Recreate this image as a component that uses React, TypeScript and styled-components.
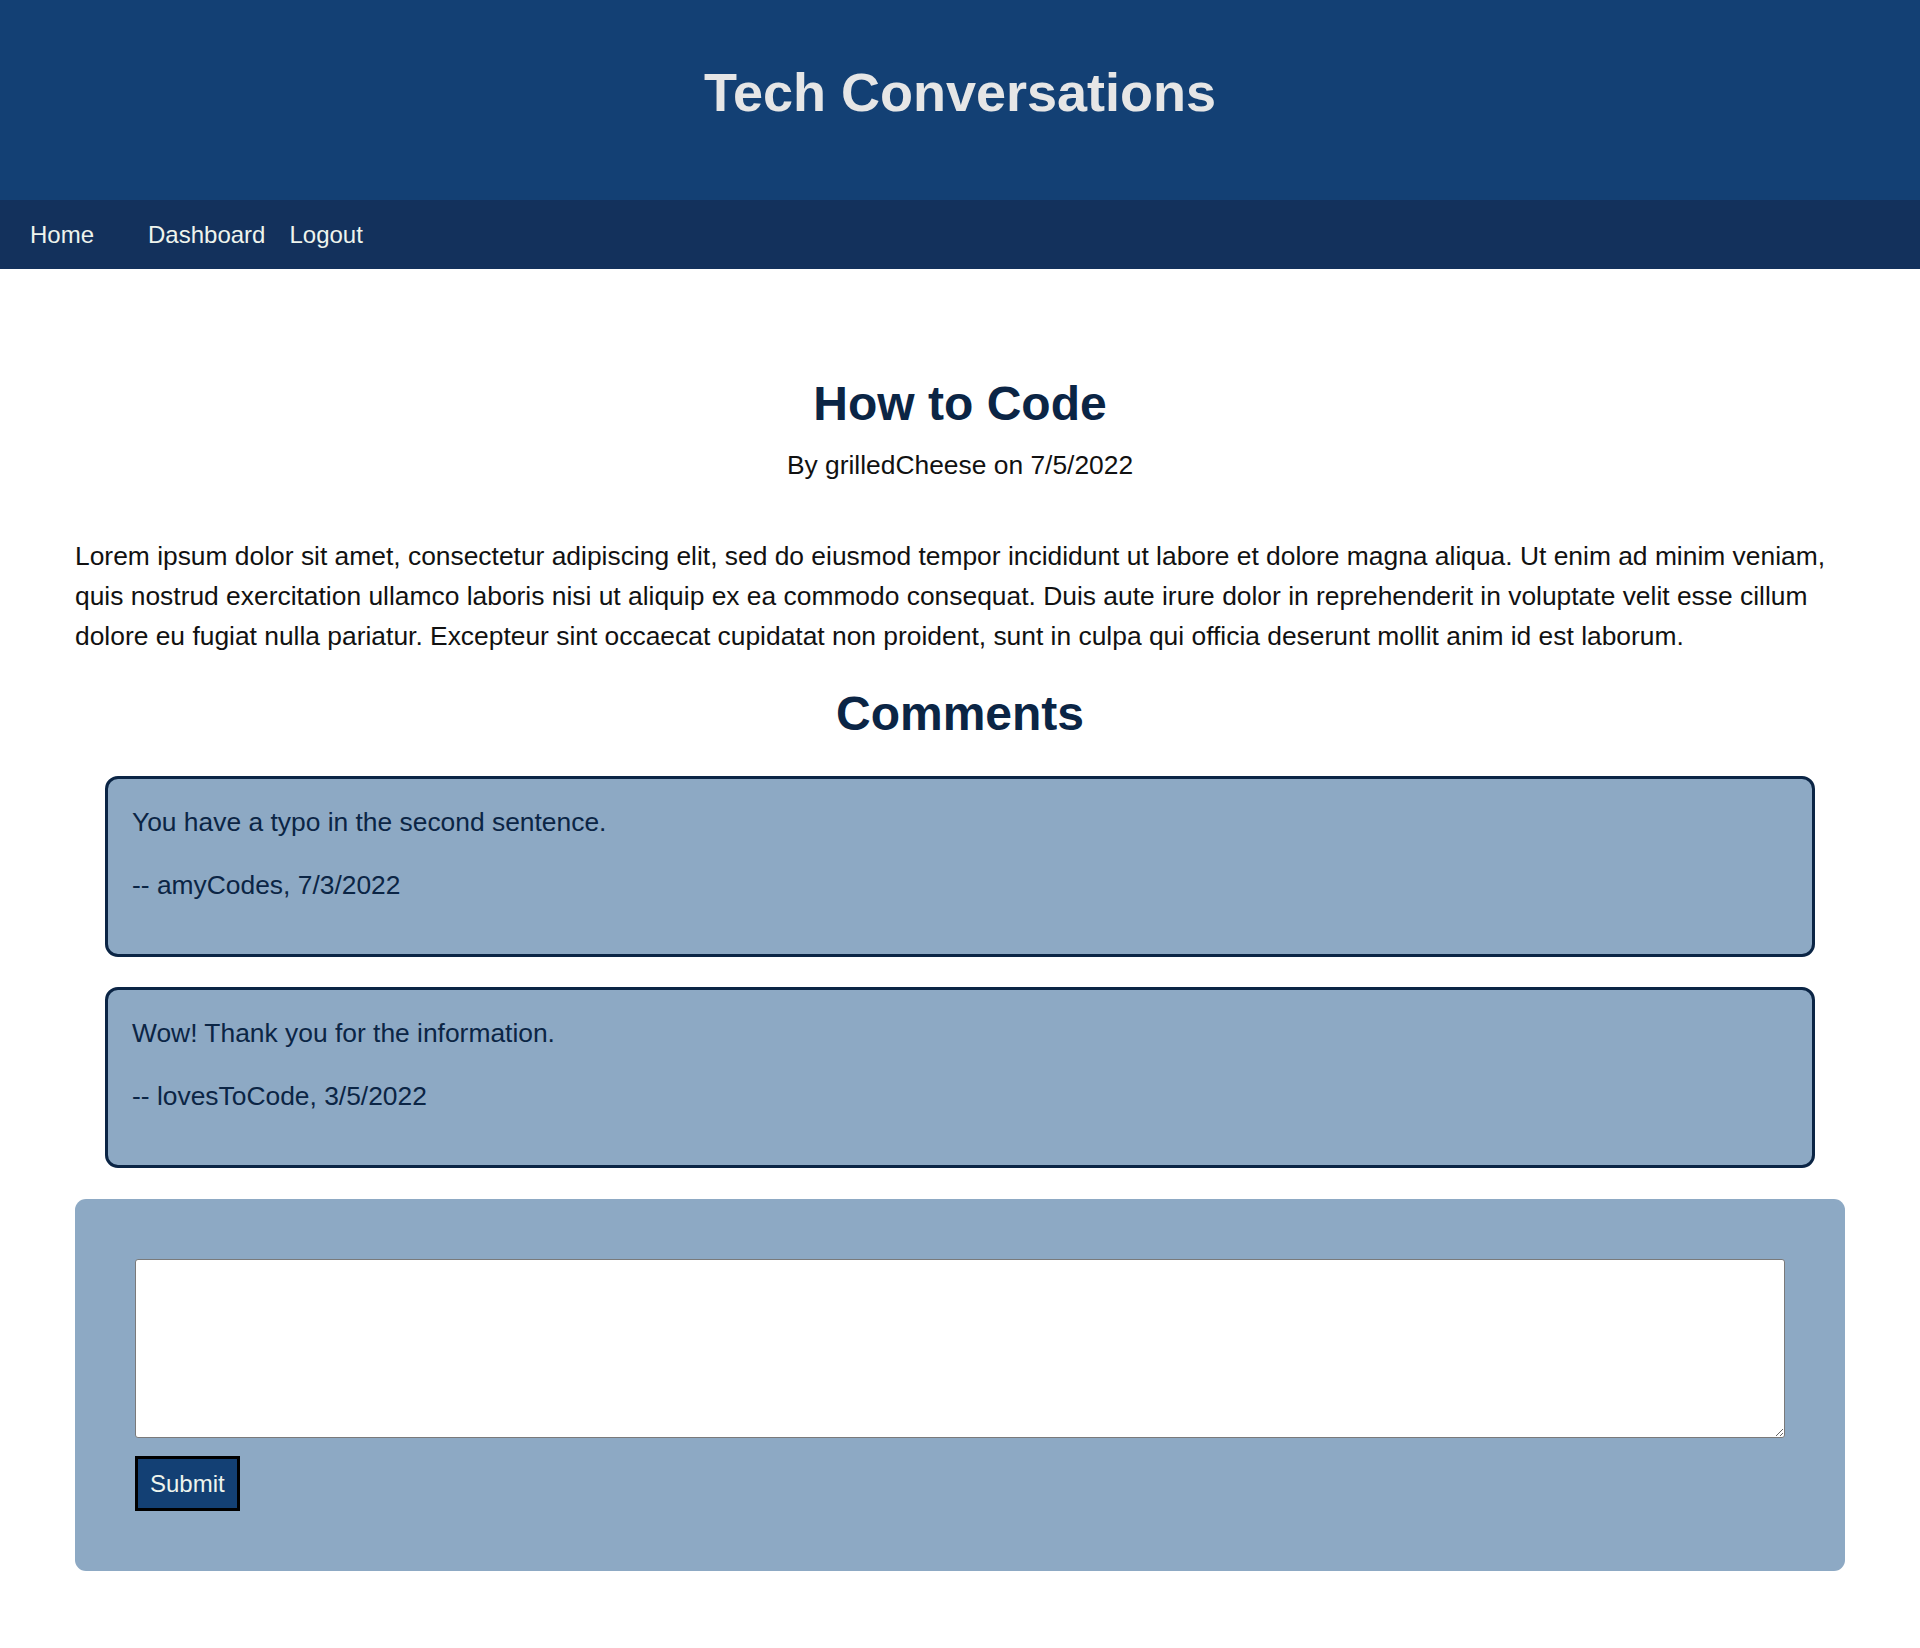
import React, { useState } from 'react';
import styled, { createGlobalStyle } from 'styled-components';

const GlobalStyle = createGlobalStyle`
  * {
    box-sizing: border-box;
  }
  body {
    margin: 0;
    font-family: 'Liberation Sans', Arial, sans-serif;
    background: #ffffff;
    color: #111111;
  }
`;

const Header = styled.header`
  height: 200px;
  background: #134074;
  display: flex;
  justify-content: center;
  align-items: center;
  padding-bottom: 16px;
  h1 {
    margin: 0;
    font-size: 54px;
    font-weight: 700;
    color: #e6e6e6;
  }
`;

const Nav = styled.nav`
  height: 69px;
  background: #13315c;
  display: flex;
  align-items: center;
  padding-left: 30px;
  gap: 24px;
`;

const NavLink = styled.a<{ $spaced?: boolean }>`
  font-size: 24px;
  color: #eef4ed;
  text-decoration: none;
  cursor: pointer;
  margin-right: ${(p) => (p.$spaced ? '30px' : '0')};
`;

const Main = styled.main`
  padding: 0 75px 77px;
  display: flex;
  flex-direction: column;
`;

const Title = styled.h2`
  margin: 107px 0 0;
  text-align: center;
  font-size: 48px;
  line-height: 56px;
  font-weight: 700;
  color: #0b2545;
`;

const Byline = styled.p`
  margin: 18px 0 0;
  text-align: center;
  font-size: 26.4px;
  line-height: 30px;
`;

const Body = styled.p`
  margin: 56px 0 0;
  font-size: 26.4px;
  line-height: 40px;
`;

const SectionTitle = styled.h2`
  margin: 30px 0 0;
  text-align: center;
  font-size: 48px;
  line-height: 56px;
  font-weight: 700;
  color: #0b2545;
`;

const CommentList = styled.ul`
  list-style: none;
  margin: 34px 0 0;
  padding: 0 30px;
  display: flex;
  flex-direction: column;
  gap: 30px;
`;

const CommentCard = styled.li`
  background: #8da9c4;
  border: 3px solid #0b2545;
  border-radius: 13px;
  padding: 28px 24px 54px;
  display: flex;
  flex-direction: column;
  gap: 33px;
  p {
    margin: 0;
    font-size: 26.4px;
    line-height: 30px;
    color: #0b2545;
  }
`;

const Form = styled.form`
  margin-top: 31px;
  background: #8da9c4;
  border-radius: 11px;
  padding: 60px;
  display: flex;
  flex-direction: column;
  align-items: flex-start;
  gap: 18px;
`;

const TextArea = styled.textarea`
  width: 100%;
  height: 179px;
  border: 1px solid #7a7a7a;
  border-radius: 3px;
  background: #ffffff;
  font-family: 'Liberation Sans', Arial, sans-serif;
  font-size: 20px;
  padding: 4px;
`;

const SubmitButton = styled.button`
  background: #134074;
  color: #eef4ed;
  border: 3px solid #000000;
  font-family: 'Liberation Sans', Arial, sans-serif;
  font-size: 24px;
  line-height: 27px;
  padding: 11px 12px;
  cursor: pointer;
`;

const comments = [
  { text: 'You have a typo in the second sentence.', user: 'amyCodes', date: '7/3/2022' },
  { text: 'Wow! Thank you for the information.', user: 'lovesToCode', date: '3/5/2022' },
];

const App = () => {
  const [draft, setDraft] = useState('');
  return (
    <>
      <GlobalStyle />
      <Header>
        <h1>Tech Conversations</h1>
      </Header>
      <Nav>
        <NavLink $spaced>Home</NavLink>
        <NavLink>Dashboard</NavLink>
        <NavLink>Logout</NavLink>
      </Nav>
      <Main>
        <Title>How to Code</Title>
        <Byline>By grilledCheese on 7/5/2022</Byline>
        <Body>
          Lorem ipsum dolor sit amet, consectetur adipiscing elit, sed do eiusmod tempor
          incididunt ut labore et dolore magna aliqua. Ut enim ad minim veniam, quis nostrud
          exercitation ullamco laboris nisi ut aliquip ex ea commodo consequat. Duis aute irure
          dolor in reprehenderit in voluptate velit esse cillum dolore eu fugiat nulla pariatur.
          Excepteur sint occaecat cupidatat non proident, sunt in culpa qui officia deserunt
          mollit anim id est laborum.
        </Body>
        <SectionTitle>Comments</SectionTitle>
        <CommentList>
          {comments.map((c) => (
            <CommentCard key={c.user}>
              <p>{c.text}</p>
              <p>
                -- {c.user}, {c.date}
              </p>
            </CommentCard>
          ))}
        </CommentList>
        <Form onSubmit={(e) => e.preventDefault()}>
          <TextArea value={draft} onChange={(e) => setDraft(e.target.value)} />
          <SubmitButton type="submit">Submit</SubmitButton>
        </Form>
      </Main>
    </>
  );
};

export default App;
